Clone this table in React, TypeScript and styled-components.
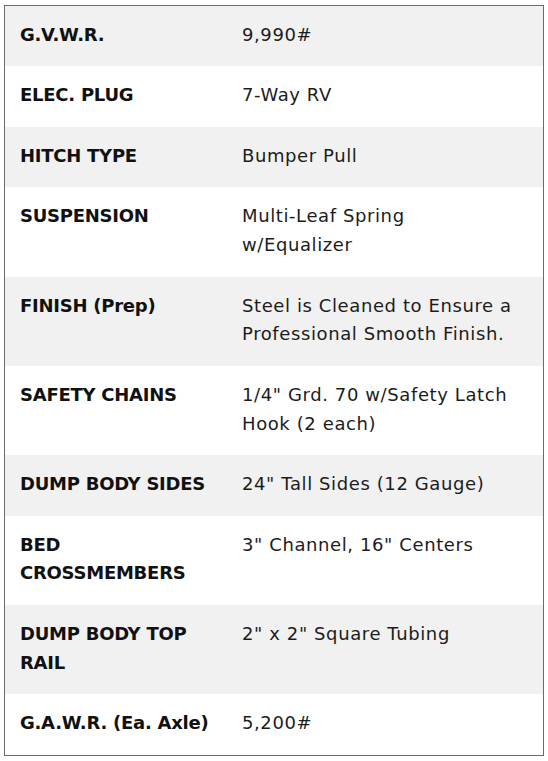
import React from "react";
import styled, { createGlobalStyle } from "styled-components";

const Global = createGlobalStyle`
  html, body { margin: 0; padding: 0; background: #ffffff; }
  body { font-family: "DejaVu Sans", "Liberation Sans", sans-serif; }
`;

const Page = styled.div`
  padding: 5px 4px;
`;

const Table = styled.div`
  width: 540px;
  box-sizing: border-box;
  border: 1px solid #6b6b6b;
  display: flex;
  flex-direction: column;
`;

const Row = styled.div<{ $shaded: boolean }>`
  display: grid;
  grid-template-columns: 222px 1fr;
  background: ${(p) => (p.$shaded ? "#f1f1f1" : "#ffffff")};
  padding: 14.8px 0 16.9px;
`;

const Label = styled.div`
  padding-left: 15px;
  font-size: 18px;
  line-height: 28.8px;
  font-weight: 700;
  letter-spacing: -0.25px;
  color: #111111;
  white-space: nowrap;
`;

const Value = styled.div`
  padding-left: 15px;
  font-size: 18px;
  line-height: 28.8px;
  font-weight: 400;
  letter-spacing: 0.6px;
  color: #1c1c1c;
  white-space: nowrap;
`;

const Line = styled.span`
  display: block;
`;

const specs: { label: string[]; value: string[] }[] = [
  { label: ["G.V.W.R."], value: ["9,990#"] },
  { label: ["ELEC. PLUG"], value: ["7-Way RV"] },
  { label: ["HITCH TYPE"], value: ["Bumper Pull"] },
  { label: ["SUSPENSION"], value: ["Multi-Leaf Spring", "w/Equalizer"] },
  { label: ["FINISH (Prep)"], value: ["Steel is Cleaned to Ensure a", "Professional Smooth Finish."] },
  { label: ["SAFETY CHAINS"], value: ["1/4\" Grd. 70 w/Safety Latch", "Hook (2 each)"] },
  { label: ["DUMP BODY SIDES"], value: ["24\" Tall Sides (12 Gauge)"] },
  { label: ["BED", "CROSSMEMBERS"], value: ["3\" Channel, 16\" Centers"] },
  { label: ["DUMP BODY TOP", "RAIL"], value: ["2\" x 2\" Square Tubing"] },
  { label: ["G.A.W.R. (Ea. Axle)"], value: ["5,200#"] },
];

export default function App() {
  return (
    <Page>
      <Global />
      <Table>
        {specs.map((s, i) => (
          <Row key={i} $shaded={i % 2 === 0}>
            <Label>
              {s.label.map((l, j) => (
                <Line key={j}>{l}</Line>
              ))}
            </Label>
            <Value>
              {s.value.map((v, j) => (
                <Line key={j}>{v}</Line>
              ))}
            </Value>
          </Row>
        ))}
      </Table>
    </Page>
  );
}
